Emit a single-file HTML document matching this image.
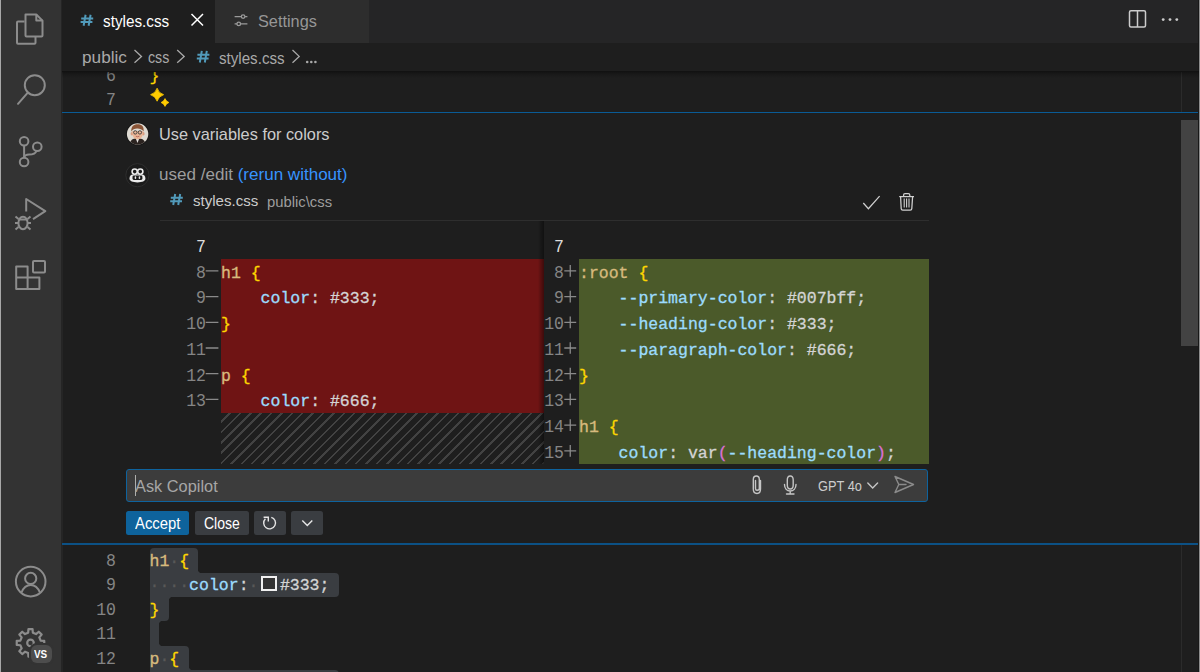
<!DOCTYPE html>
<html><head><meta charset="utf-8">
<style>
*{margin:0;padding:0;box-sizing:border-box}
html,body{width:1200px;height:672px;overflow:hidden;background:#1e1e1e}
body{position:relative;font-family:"Liberation Sans",sans-serif;color:#cccccc}
.a{position:absolute}
.t{position:absolute;white-space:pre;font-family:"Liberation Sans",sans-serif}
.m{position:absolute;white-space:pre;font-family:"Liberation Mono",monospace;font-size:16.5px;-webkit-text-stroke:0.3px currentColor}
.ln{position:absolute;white-space:pre;font-family:"Liberation Mono",monospace;font-size:16.5px;text-align:right;color:#858585;transform:scaleY(1.08);transform-origin:0 68%}
.sel{color:#d7ba7d}.br{color:#ffd700}.pr{color:#9cdcfe}.vl{color:#d4d4d4}.pk{color:#da70d6}
svg{position:absolute;overflow:visible}
</style></head><body>

<!-- left edge strip -->
<div class="a" style="left:0;top:0;width:1px;height:672px;background:#a8a8a8"></div>
<!-- activity bar -->
<div class="a" style="left:1px;top:0;width:60px;height:672px;background:#333333"></div>
<div class="a" style="left:61px;top:0;width:2.3px;height:672px;background:#252525"></div>

<!-- activity icons -->
<svg style="left:0;top:0" width="62" height="672" fill="none" stroke="#8c8c8c" stroke-width="2" stroke-linejoin="round">
  <!-- files -->
  <path d="M24.5 21.5 H18 a1 1 0 0 0 -1 1 V42.8 a1 1 0 0 0 1 1 H34.5 a1 1 0 0 0 1 -1 V36.5"/>
  <path d="M25.5 14.5 H36.3 L42.5 20.6 V35.5 a1 1 0 0 1 -1 1 H26.5 a1 1 0 0 1 -1 -1 Z"/>
  <path d="M36.3 14.5 V20.6 H42.5"/>
  <!-- search -->
  <circle cx="34.8" cy="85.2" r="10"/>
  <path d="M27.8 92.6 L18 103.8" stroke-linecap="round"/>
  <!-- source control -->
  <circle cx="24.1" cy="141.2" r="4.3"/>
  <circle cx="37.3" cy="146.8" r="4.3"/>
  <circle cx="24.1" cy="162" r="4.3"/>
  <path d="M24.1 145.5 V157.7"/>
  <path d="M36.5 151 C35.5 154 33 154.5 29 154.5 C26 154.5 24.5 156 24.1 157.5"/>
  <!-- debug -->
  <path d="M26.2 211.5 V199 L45.3 211.2 L33 219.2"/>
  <ellipse cx="23" cy="223" rx="4.6" ry="6.3"/>
  <path d="M18.5 219.5 H27.5"/>
  <path d="M15.5 216.5 L18.5 219 M30.5 216.5 L27.5 219 M15 223 H18.3 M31 223 H27.7 M15.5 229.5 L18.5 227 M30.5 229.5 L27.5 227"/>
  <!-- extensions -->
  <path d="M16.2 266.5 H27.6 V289 H16.2 Z M16.2 277.6 H39.4 V289 H27.6"/>
  <rect x="33" y="261" width="12" height="11.6" rx="1"/>
  <!-- account -->
  <circle cx="30.7" cy="581.6" r="14.8"/>
  <circle cx="30.7" cy="578.4" r="5.6"/>
  <path d="M21.5 592.5 C23.5 587.5 26.5 585 30.7 585 C34.9 585 37.9 587.5 39.9 592.5"/>
  <!-- gear -->
  <path d="M28.16 632.77 L28.45 629.15 L32.55 629.15 L32.84 632.77 L36.01 634.08 L38.77 631.73 L41.67 634.63 L39.32 637.39 L40.63 640.56 L44.25 640.85 L44.25 644.95 L40.63 645.24 L39.32 648.41 L41.67 651.17 L38.77 654.07 L36.01 651.72 L32.84 653.03 L32.55 656.65 L28.45 656.65 L28.16 653.03 L24.99 651.72 L22.23 654.07 L19.33 651.17 L21.68 648.41 L20.37 645.24 L16.75 644.95 L16.75 640.85 L20.37 640.56 L21.68 637.39 L19.33 634.63 L22.23 631.73 L24.99 634.08 Z" stroke-width="2.2"/>
  <circle cx="30.5" cy="642.9" r="3.3" stroke-width="2.2"/>
</svg>
<div class="a" style="left:29.2px;top:643.4px;width:24.4px;height:21.5px;border-radius:8px;background:#333333"></div>
<div class="a" style="left:31.2px;top:645.4px;width:20.4px;height:17.5px;border-radius:6px;background:#4d4d4d"></div>
<div class="t" style="left:34.2px;top:646.5px;font-size:11px;line-height:14px;font-weight:bold;transform:scaleX(0.9);transform-origin:0 0;color:#fff">VS</div>

<!-- tab bar -->
<div class="a" style="left:61.5px;top:0;width:1137px;height:42.5px;background:#252526"></div>
<div class="a" style="left:61.5px;top:0;width:153.5px;height:42.5px;background:#1e1e1e"></div>
<div class="a" style="left:215px;top:0;width:154px;height:42.5px;background:#2d2d2d"></div>
<svg style="left:0;top:0" width="100" height="40" fill="none" stroke="#519aba" stroke-width="2"><path d="M85.6 14.8 L83.6 25.8 M90.6 14.8 L88.6 25.8 M81.2 18.5 H93.2 M80.6 22.1 H92.4"/></svg>
<div class="t" style="left:102.90px;top:14.10px;font-size:15.75px;line-height:15.75px;transform:scaleX(0.970);transform-origin:0 0;color:#ffffff">styles.css</div>
<svg style="left:0;top:0" width="400" height="43" fill="none" stroke="#ffffff" stroke-width="1.5">
  <path d="M191.5 14 L203 25.5 M203 14 L191.5 25.5"/>
</svg>
<svg style="left:0;top:0" width="400" height="43" fill="none" stroke="#9a9a9a" stroke-width="1.3">
  <path d="M234.6 16.6 H241.3 M244.9 16.6 H247.4 M234.6 23.9 H237 M240.5 23.9 H247.4"/>
  <circle cx="243.1" cy="16.6" r="1.8"/>
  <circle cx="238.75" cy="23.9" r="1.8"/>
</svg>
<div class="t" style="left:257.60px;top:14.00px;font-size:15.75px;line-height:15.75px;transform:scaleX(1.034);transform-origin:0 0;color:#969696">Settings</div>
<svg style="left:0;top:0" width="1200" height="43" fill="none" stroke="#cccccc" stroke-width="1.5">
  <rect x="1129.5" y="10.8" width="16" height="16.2" rx="1.5"/>
  <path d="M1137.5 10.8 V27"/>
</svg>
<svg style="left:0;top:0" width="1200" height="43" fill="#cccccc">
  <circle cx="1163.2" cy="19.6" r="1.4"/><circle cx="1170" cy="19.6" r="1.4"/><circle cx="1176.8" cy="19.6" r="1.4"/>
</svg>

<!-- breadcrumb -->
<div class="a" style="left:61.5px;top:42.5px;width:1137px;height:29px;background:#1e1e1e"></div>
<div class="t" style="left:81.81px;top:50.30px;font-size:15.75px;line-height:15.75px;transform:scaleX(1.092);transform-origin:0 0;color:#a9a9a9">public</div>
<div class="t" style="left:147.90px;top:50.40px;font-size:15.75px;line-height:15.75px;transform:scaleX(0.901);transform-origin:0 0;color:#a9a9a9">css</div>
<svg style="left:0;top:0" width="300" height="80" fill="none" stroke="#519aba" stroke-width="2"><path d="M201.8 50.9 L199.8 62.5 M206.8 50.9 L204.8 62.5 M197.4 54.7 H209.4 M196.8 58.5 H208.6"/></svg>
<div class="t" style="left:218.80px;top:50.50px;font-size:15.75px;line-height:15.75px;transform:scaleX(0.961);transform-origin:0 0;color:#a9a9a9">styles.css</div>
<svg style="left:0;top:0" width="400" height="80" fill="#a9a9a9"><circle cx="307.2" cy="62" r="1.3"/><circle cx="311.3" cy="62" r="1.3"/><circle cx="315.4" cy="62" r="1.3"/></svg>
<svg style="left:0;top:0" width="400" height="80" fill="none" stroke="#a9a9a9" stroke-width="1.3">
  <path d="M134.5 50 L141.5 56.4 L134.5 62.8 M177.2 50 L184.2 56.4 L177.2 62.8 M292.5 50 L299.2 56.4 L292.5 62.8"/>
</svg>
<!-- breadcrumb shadow -->
<div class="a" style="left:61.5px;top:71px;width:1137px;height:6.5px;z-index:2;background:linear-gradient(rgba(0,0,0,0.45),rgba(0,0,0,0.18) 45%,rgba(0,0,0,0))"></div>

<!-- top editor lines -->
<div class="a" style="left:0;top:71.5px;width:1180px;height:40.5px;overflow:hidden">
<div class="ln" style="left:60px;top:-6.5px;width:56px;line-height:24.4px">6</div>
<div class="ln" style="left:60px;top:17.9px;width:56px;line-height:24.4px">7</div>
<div class="m br" style="left:149.5px;top:-6.5px;line-height:24.4px">}</div>
</div>
<svg style="left:0;top:0" width="200" height="120" fill="#ffcc00" stroke="#ffcc00" stroke-width="0.8" stroke-linejoin="round">
  <path d="M157.1 88.2 Q158.6 93.2 163.6 94.7 Q158.6 96.2 157.1 101.2 Q155.6 96.2 150.6 94.7 Q155.6 93.2 157.1 88.2 Z"/>
  <path d="M165 98.6 Q166 101.5 168.9 102.5 Q166 103.5 165 106.4 Q164 103.5 161.1 102.5 Q164 101.5 165 98.6 Z"/>
</svg>
<!-- ruler line -->
<div class="a" style="left:1181px;top:71.5px;width:1px;height:41px;background:#2b2b2b"></div>

<!-- blue line top -->
<div class="a" style="left:61.5px;top:112px;width:1137px;height:1px;background:#0a5b95"></div>

<!-- scrollbar -->
<div class="a" style="left:1181px;top:120px;width:17.5px;height:226px;background:#434343"></div>

<!-- chat header -->
<svg style="left:0;top:0" width="200" height="200">
  <defs><clipPath id="av"><circle cx="137.6" cy="134" r="10.7"/></clipPath></defs>
  <circle cx="137.6" cy="134" r="11.6" fill="#161616"/>
  <g clip-path="url(#av)">
    <rect x="126" y="122" width="24" height="24" fill="#dedad2"/>
    <path d="M129.5 146 C129.5 140.5 132.5 138.3 137.5 138.3 C142.5 138.3 145.7 140.5 145.7 146 Z" fill="#2b2320"/>
    <path d="M136 139 L137.5 143 L139 139 Z" fill="#e8e4e0"/>
    <ellipse cx="131.9" cy="133.8" rx="1.3" ry="1.8" fill="#d99c80"/>
    <ellipse cx="143.3" cy="133.8" rx="1.3" ry="1.8" fill="#d99c80"/>
    <path d="M132.2 131 C132.2 137 134 139.2 137.6 139.2 C141.2 139.2 143 137 143 131 Z" fill="#eab596"/>
    <path d="M131.3 131.5 C131 126.5 133.5 124.3 137.6 124.3 C141.8 124.3 144.2 126.5 143.6 131.5 C142 129 139 128.3 137 128.5 C134.5 128.7 132.5 129.5 131.3 131.5 Z" fill="#8a5436"/>
    <circle cx="135.3" cy="132.4" r="1.7" fill="none" stroke="#3a3a3a" stroke-width="0.9"/>
    <circle cx="139.9" cy="132.4" r="1.7" fill="none" stroke="#3a3a3a" stroke-width="0.9"/>
    <path d="M135.8 136.2 Q137.6 137.4 139.4 136.2" fill="none" stroke="#b05a50" stroke-width="0.8"/>
  </g>
</svg>
<div class="t" style="left:159.36px;top:127.00px;font-size:15.75px;line-height:15.75px;transform:scaleX(1.036);transform-origin:0 0;color:#cccccc">Use variables for colors</div>

<svg style="left:0;top:0" width="200" height="200">
  <circle cx="137.4" cy="175.2" r="11.6" fill="#1b1b1b" stroke="#2e2e2e" stroke-width="1"/>
  <path d="M129.5 178.6 C129.5 175.6 130.9 174.4 133 174.4 H141.9 C144 174.4 145.4 175.6 145.4 178.6 C145.4 181.2 142.2 182.4 137.45 182.4 C132.7 182.4 129.5 181.2 129.5 178.6 Z" fill="#ececec"/>
  <rect x="132.5" y="175.4" width="9.9" height="4.5" rx="1.3" fill="#1b1b1b"/>
  <rect x="134.7" y="176.2" width="1.5" height="2.8" rx="0.7" fill="#ececec"/>
  <rect x="138.7" y="176.2" width="1.5" height="2.8" rx="0.7" fill="#ececec"/>
  <circle cx="134.7" cy="171.6" r="2.6" fill="#1b1b1b" stroke="#ececec" stroke-width="1.6"/>
  <circle cx="140.3" cy="171.6" r="2.6" fill="#1b1b1b" stroke="#ececec" stroke-width="1.6"/>
</svg>
<div class="t" style="left:159.32px;top:166.80px;font-size:15.75px;line-height:15.75px;transform:scaleX(1.082);transform-origin:0 0;color:#9d9d9d">used /edit <span style="color:#3794ff">(rerun without)</span></div>

<!-- file row -->
<svg style="left:0;top:0" width="300" height="230" fill="none" stroke="#519aba" stroke-width="2"><path d="M175.2 194 L173.2 205 M180.2 194 L178.2 205 M170.8 197.7 H182.8 M170.2 201.3 H182"/></svg>
<div class="t" style="left:192.90px;top:193.80px;font-size:14.55px;line-height:14.55px;transform:scaleX(1.035);transform-origin:0 0;color:#cccccc">styles.css</div>
<div class="t" style="left:266.70px;top:194.50px;font-size:14.55px;line-height:14.55px;transform:scaleX(1.019);transform-origin:0 0;color:#9d9d9d">public\css</div>
<svg style="left:0;top:0" width="1000" height="230" fill="none" stroke="#d0d0d0" stroke-width="1.25">
  <path d="M863.3 203 L868.4 208.7 L879.6 196.2"/>
  <path d="M899.2 196.6 H914"/>
  <path d="M903.6 196.6 V195 a1.4 1.4 0 0 1 1.4 -1.4 H908.4 a1.4 1.4 0 0 1 1.4 1.4 V196.6"/>
  <path d="M900.6 196.6 L901.2 208.6 a1.6 1.6 0 0 0 1.6 1.5 H910.2 a1.6 1.6 0 0 0 1.6 -1.5 L912.6 196.6"/>
  <path d="M904.2 198.6 V207.6 M906.6 198.6 V207.6 M909 198.6 V207.6" stroke-width="1.1"/>
</svg>
<div class="a" style="left:160px;top:220px;width:769px;height:1px;background:#2e2e2e"></div>

<!-- diff left pane -->
<div class="a" style="left:221px;top:259.2px;width:323px;height:154.2px;background:#6f1414"></div>
<div class="a" style="left:221px;top:413.4px;width:323px;height:50.6px;overflow:hidden"><div class="a" id="hatch" style="left:-7.5px;top:0;width:340px;height:340px;background:repeating-linear-gradient(-45deg,#1e1e1e 0px,#1e1e1e 5.6px,#424242 5.6px,#424242 7.35px)"></div></div>
<div class="a" style="left:538px;top:221px;width:6px;height:243px;background:linear-gradient(90deg,rgba(0,0,0,0),rgba(0,0,0,0.45))"></div>
<!-- diff right pane -->
<div class="a" style="left:579px;top:259.2px;width:350px;height:205px;background:#4b5a2a"></div>

<div id="diffL">
<div class="ln" style="left:160px;top:235px;width:46px;line-height:25.7px;color:#dcdcdc">7</div>
<div class="ln" style="left:160px;top:260.7px;width:46px;line-height:25.7px">8</div>
<div class="ln" style="left:160px;top:286.4px;width:46px;line-height:25.7px">9</div>
<div class="ln" style="left:160px;top:312.1px;width:46px;line-height:25.7px">10</div>
<div class="ln" style="left:160px;top:337.8px;width:46px;line-height:25.7px">11</div>
<div class="ln" style="left:160px;top:363.5px;width:46px;line-height:25.7px">12</div>
<div class="ln" style="left:160px;top:389.2px;width:46px;line-height:25.7px">13</div>
<div class="m" style="left:221px;top:260.7px;line-height:25.7px"><span class="sel">h1</span> <span class="br">{</span></div>
<div class="m" style="left:221px;top:286.4px;line-height:25.7px">    <span class="pr">color</span><span class="vl">: #333;</span></div>
<div class="m" style="left:221px;top:312.1px;line-height:25.7px"><span class="br">}</span></div>
<div class="m" style="left:221px;top:363.5px;line-height:25.7px"><span class="sel">p</span> <span class="br">{</span></div>
<div class="m" style="left:221px;top:389.2px;line-height:25.7px">    <span class="pr">color</span><span class="vl">: #666;</span></div>
</div>
<svg style="left:0;top:0" width="1000" height="500" fill="none" stroke="#8a8a8a" stroke-width="1.3">
  <path d="M205.7 270.9 H218.4 M205.7 296.6 H218.4 M205.7 322.3 H218.4 M205.7 348.0 H218.4 M205.7 373.7 H218.4 M205.7 399.4 H218.4"/>
  <path d="M564.3 270.9 H576.2 M570.25 265.05 V276.75 M564.3 296.6 H576.2 M570.25 290.75 V302.45 M564.3 322.3 H576.2 M570.25 316.45 V328.15 M564.3 348.0 H576.2 M570.25 342.15 V353.85 M564.3 373.7 H576.2 M570.25 367.85 V379.55 M564.3 399.4 H576.2 M570.25 393.55 V405.25 M564.3 425.1 H576.2 M570.25 419.25 V430.95 M564.3 450.8 H576.2 M570.25 444.95 V456.65"/>
</svg>

<div id="diffR">
<div class="ln" style="left:530px;top:235px;width:34px;line-height:25.7px;color:#dcdcdc">7</div>
<div class="ln" style="left:530px;top:260.7px;width:34px;line-height:25.7px">8</div>
<div class="ln" style="left:530px;top:286.4px;width:34px;line-height:25.7px">9</div>
<div class="ln" style="left:530px;top:312.1px;width:34px;line-height:25.7px">10</div>
<div class="ln" style="left:530px;top:337.8px;width:34px;line-height:25.7px">11</div>
<div class="ln" style="left:530px;top:363.5px;width:34px;line-height:25.7px">12</div>
<div class="ln" style="left:530px;top:389.2px;width:34px;line-height:25.7px">13</div>
<div class="ln" style="left:530px;top:414.9px;width:34px;line-height:25.7px">14</div>
<div class="ln" style="left:530px;top:440.6px;width:34px;line-height:25.7px">15</div>
<div class="m" style="left:579px;top:260.7px;line-height:25.7px"><span class="sel">:root</span> <span class="br">{</span></div>
<div class="m" style="left:579px;top:286.4px;line-height:25.7px">    <span class="pr">--primary-color</span><span class="vl">: #007bff;</span></div>
<div class="m" style="left:579px;top:312.1px;line-height:25.7px">    <span class="pr">--heading-color</span><span class="vl">: #333;</span></div>
<div class="m" style="left:579px;top:337.8px;line-height:25.7px">    <span class="pr">--paragraph-color</span><span class="vl">: #666;</span></div>
<div class="m" style="left:579px;top:363.5px;line-height:25.7px"><span class="br">}</span></div>
<div class="m" style="left:579px;top:414.9px;line-height:25.7px"><span class="sel">h1</span> <span class="br">{</span></div>
<div class="m" style="left:579px;top:440.6px;line-height:25.7px">    <span class="pr">color</span><span class="vl">: var</span><span class="pk">(</span><span class="pr">--heading-color</span><span class="pk">)</span><span class="vl">;</span></div>
</div>

<!-- input box -->
<div class="a" style="left:125.5px;top:469px;width:802px;height:32.5px;border:1px solid #0e639e;border-radius:3px;background:#3c3c3c"></div>
<div class="a" style="left:135px;top:475px;width:1px;height:21px;background:#aeafad"></div>
<div class="t" style="left:135.00px;top:478.80px;font-size:15.75px;line-height:15.75px;transform:scaleX(1.038);transform-origin:0 0;color:#a6a6a6">Ask Copilot</div>
<svg style="left:0;top:0" width="1000" height="520" fill="none" stroke="#c5c5c5" stroke-width="1.4" stroke-linecap="round">
  <path d="M760.5 480.5 V489 C760.5 492 759 493.5 757 493.5 C755 493.5 753.3 492 753.3 489 V479.5 C753.3 477.3 754.5 476 756.3 476 C758 476 759.3 477.3 759.3 479.5 V488.5 C759.3 489.6 758.5 490.3 757 490.3 C755.8 490.3 755.5 489.6 755.5 488.5 V480.5"/>
  <path d="M787.3 480 C787.3 477.5 788.5 476 790.2 476 C792 476 793.2 477.5 793.2 480 V485 C793.2 487.5 792 489 790.2 489 C788.5 489 787.3 487.5 787.3 485 Z"/>
  <path d="M784.5 484.5 C784.5 488.5 787 491 790.2 491 C793.4 491 796 488.5 796 484.5 M790.2 491 V494 M786.5 494 H794"/>
  <path d="M867.8 483 L872.7 488 L877.6 483"/>
  <path d="M895 476.5 L913.5 484.5 L895 492.5 L898.8 484.5 Z M898.8 484.5 H906" stroke="#8b8b8b" stroke-linejoin="round"/>
</svg>
<div class="t" style="left:817.50px;top:479.20px;font-size:14.55px;line-height:14.55px;transform:scaleX(0.881);transform-origin:0 0;color:#cccccc">GPT 4o</div>

<!-- buttons -->
<div class="a" style="left:126px;top:511px;width:63px;height:23.8px;border-radius:2.5px;background:#0e639c"></div>
<div class="t" style="left:135.00px;top:516.00px;font-size:15.75px;line-height:15.75px;transform:scaleX(0.943);transform-origin:0 0;color:#ffffff">Accept</div>
<div class="a" style="left:194.5px;top:511px;width:54px;height:23.8px;border-radius:2.5px;background:#3a3d41"></div>
<div class="t" style="left:203.50px;top:516.00px;font-size:15.75px;line-height:15.75px;transform:scaleX(0.889);transform-origin:0 0;color:#ffffff">Close</div>
<div class="a" style="left:253.9px;top:511px;width:31.7px;height:23.8px;border-radius:2.5px;background:#3a3d41"></div>
<div class="a" style="left:291px;top:511px;width:31.7px;height:23.8px;border-radius:2.5px;background:#3a3d41"></div>
<svg style="left:0;top:0" width="400" height="560" fill="none" stroke="#e6e6e6" stroke-width="1.4">
  <path d="M271.3 517.3 A5.9 5.9 0 1 1 265.4 518.8"/>
  <path d="M263.6 517.3 H268.3 V521.6"/>
  <path d="M302.3 520.6 L307.3 525.6 L312.3 520.6"/>
</svg>

<!-- blue line bottom -->
<div class="a" style="left:61.5px;top:543px;width:1137px;height:2px;background:#0c5185"></div>
<div class="a" style="left:1181px;top:544.5px;width:1px;height:128px;background:#2b2b2b"></div>

<!-- bottom editor -->
<div class="a" style="left:149.5px;top:548.2px;width:48.5px;height:24.4px;border-radius:4px 4px 0 0;background:#3a3d41"></div>
<div class="a" style="left:149.5px;top:572.6px;width:189.5px;height:24.4px;border-radius:0 4px 4px 0;background:#3a3d41"></div>
<div class="a" style="left:149.5px;top:597.0px;width:19.2px;height:24.4px;border-radius:0 0 4px 0;background:#3a3d41"></div>
<div class="a" style="left:149.5px;top:621.4px;width:9.8px;height:24.4px;border-radius:0;background:#3a3d41"></div>
<div class="a" style="left:149.5px;top:645.8px;width:39.7px;height:24.4px;border-radius:0 4px 0 0;background:#3a3d41"></div>
<div class="a" style="left:149.5px;top:670.2px;width:189.5px;height:24.4px;border-radius:0 4px 0 0;background:#3a3d41"></div>
<div class="a" style="left:198px;top:568.6px;width:4px;height:4px;background:radial-gradient(circle at 100% 0%,rgba(0,0,0,0) 4px,#3a3d41 4.6px)"></div>
<div class="a" style="left:168.7px;top:597px;width:4px;height:4px;background:radial-gradient(circle at 100% 100%,rgba(0,0,0,0) 4px,#3a3d41 4.6px)"></div>
<div class="a" style="left:159.3px;top:621.4px;width:4px;height:4px;background:radial-gradient(circle at 100% 100%,rgba(0,0,0,0) 4px,#3a3d41 4.6px)"></div>
<div class="a" style="left:159.3px;top:641.8px;width:4px;height:4px;background:radial-gradient(circle at 100% 0%,rgba(0,0,0,0) 4px,#3a3d41 4.6px)"></div>
<div class="a" style="left:189.2px;top:666.2px;width:4px;height:4px;background:radial-gradient(circle at 100% 0%,rgba(0,0,0,0) 4px,#3a3d41 4.6px)"></div>

<div class="ln" style="left:60px;top:550px;width:56px;line-height:24.4px">8</div>
<div class="ln" style="left:60px;top:574.4px;width:56px;line-height:24.4px">9</div>
<div class="ln" style="left:60px;top:598.8px;width:56px;line-height:24.4px">10</div>
<div class="ln" style="left:60px;top:623.2px;width:56px;line-height:24.4px">11</div>
<div class="ln" style="left:60px;top:647.6px;width:56px;line-height:24.4px">12</div>
<div class="m" style="left:149.5px;top:550px;line-height:24.4px"><span class="sel">h1</span><span style="color:#585858">·</span><span class="br">{</span></div>
<div class="m" style="left:149.5px;top:574.4px;line-height:24.4px"><span style="color:#585858">····</span><span class="pr">color</span><span class="vl">:</span><span style="color:#585858">·</span></div>
<div class="m vl" style="left:279.9px;top:574.4px;line-height:24.4px">#333;</div>
<div class="a" style="left:261.2px;top:576px;width:15.5px;height:14.8px;border:2px solid #f0f0f0;background:#333333"></div>
<div class="m" style="left:149.5px;top:598.8px;line-height:24.4px"><span class="br">}</span></div>
<div class="m" style="left:149.5px;top:647.6px;line-height:24.4px"><span class="sel">p</span><span style="color:#585858">·</span><span class="br">{</span></div>

<!-- right edge strip -->
<div class="a" style="left:1198px;top:0;width:1px;height:672px;background:#181818"></div>
<div class="a" style="left:1199px;top:0;width:1px;height:672px;background:#8c8c8c"></div>
</body></html>
